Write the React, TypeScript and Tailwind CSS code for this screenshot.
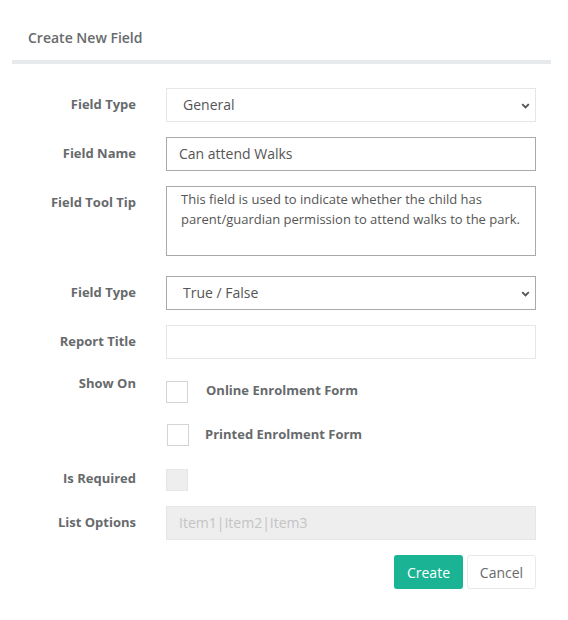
import React from "react";

const font = { fontFamily: '"Open Sans", "Noto Sans", sans-serif' };

function Chevron() {
  return (
    <svg width="9" height="6" viewBox="0 0 9 6" className="absolute right-[5px] top-[14px]">
      <path d="M1.2 1.2 L4.5 4.5 L7.8 1.2" fill="none" stroke="#555" strokeWidth="1.9" />
    </svg>
  );
}

function Label({ children, className = "" }: { children: React.ReactNode; className?: string }) {
  return (
    <div className={`w-[124px] shrink-0 text-right text-[13px] font-bold leading-[18px] text-[#676a6c] ${className}`}>
      {children}
    </div>
  );
}

function Box({ className = "" }: { className?: string }) {
  return <div className={`h-[22px] w-[22px] shrink-0 border border-[#d6d3d0] ${className}`} />;
}

export default function App() {
  return (
    <div style={font} className="h-[620px] w-[568px] bg-white">
      <div className="ml-[12px] w-[539px]">
        <div className="border-b-[4px] border-[#e7eaec] pb-[12px] pl-[16px] pt-[28px]">
          <h5 className="text-[14px] font-semibold leading-[20px] text-[#676a6c]">Create New Field</h5>
        </div>

        <div className="pt-[24px]">
          <div className="flex gap-[30px]">
            <Label className="pt-[7px]">Field Type</Label>
            <div className="relative h-[34px] w-[370px] border border-[#e5e6e7] pl-[16px] text-[14px] leading-[32px] text-[#555]">
              General
              <Chevron />
            </div>
          </div>

          <div className="mt-[15px] flex gap-[30px]">
            <Label className="pt-[7px]">Field Name</Label>
            <div className="h-[34px] w-[370px] border border-[#aaaaaa] pl-[12px] text-[14px] leading-[32px] text-[#555]">
              Can attend Walks
            </div>
          </div>

          <div className="mt-[15px] flex gap-[30px]">
            <Label className="pt-[7px]">Field Tool Tip</Label>
            <div className="h-[70px] w-[370px] border border-[#aaaaaa] px-[14px] pt-[2px] text-[13px] leading-[20px] text-[#555]">
              This field is used to indicate whether the child has parent/guardian permission to attend walks to the park.
            </div>
          </div>

          <div className="mt-[20px] flex gap-[30px]">
            <Label className="pt-[7px]">Field Type</Label>
            <div className="relative h-[34px] w-[370px] border border-[#aaaaaa] pl-[16px] text-[14px] leading-[32px] text-[#555]">
              True / False
              <Chevron />
            </div>
          </div>

          <div className="mt-[15px] flex gap-[30px]">
            <Label className="pt-[7px]">Report Title</Label>
            <div className="h-[34px] w-[370px] border border-[#e5e6e7]" />
          </div>

          <div className="mt-[15px] flex gap-[30px]">
            <Label>Show On</Label>
            <div className="flex flex-col pt-[7px]">
              <div className="flex items-center gap-[18px]">
                <Box />
                <span className="-translate-y-[2px] text-[13px] font-bold leading-[18px] text-[#676a6c]">Online Enrolment Form</span>
              </div>
              <div className="mt-[21px] flex items-center gap-[16px] pl-[1px]">
                <Box />
                <span className="-translate-y-[1px] text-[13px] font-bold leading-[18px] text-[#676a6c]">Printed Enrolment Form</span>
              </div>
            </div>
          </div>

          <div className="mt-[23px] flex gap-[30px]">
            <Label>Is Required</Label>
            <Box className="border-[#e5e6e7] bg-[#eeeeee]" />
          </div>

          <div className="mt-[15px] flex gap-[30px]">
            <Label className="pt-[7px]">List Options</Label>
            <div className="h-[34px] w-[370px] border border-[#e5e6e7] bg-[#eeeeee] pl-[12px] text-[14px] leading-[32px] text-[#c4c4c4]">
              Item1|Item2|Item3
            </div>
          </div>

          <div className="mt-[15px] flex justify-end gap-[4px] pr-[15px]">
            <button className="h-[34px] w-[69px] rounded-[3px] bg-[#1ab394] text-[14px] text-white">Create</button>
            <button className="h-[34px] w-[69px] rounded-[3px] border border-[#e7eaec] bg-white text-[14px] text-[#676a6c]">Cancel</button>
          </div>
        </div>
      </div>
    </div>
  );
}
